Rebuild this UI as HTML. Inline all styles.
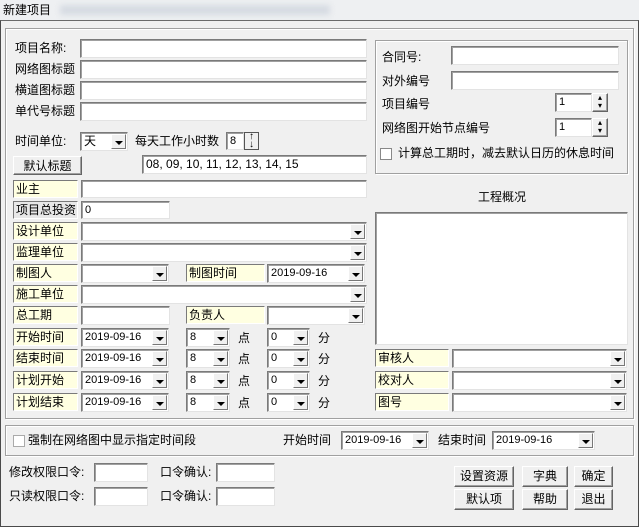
<!DOCTYPE html>
<html><head><meta charset="utf-8"><style>
*{box-sizing:border-box;margin:0;padding:0}
body{width:639px;height:527px;background:#f0f0f0;position:relative;overflow:hidden;font-family:"Liberation Sans","Noto Sans CJK SC","WenQuanYi Zen Hei",sans-serif;font-size:12px;color:#000}
.a{position:absolute;white-space:nowrap;line-height:14px}
.in{position:absolute;background:#fff;border:1px solid;border-color:#7a7a7a #e3e3e3 #e3e3e3 #7a7a7a;box-shadow:inset 1px 1px 0 #a0a0a0;font-size:11px;line-height:17px;padding-left:3px;font-family:"Liberation Sans","DejaVu Sans",sans-serif;white-space:nowrap;overflow:hidden}
.lb{position:absolute;background:#ffffe1;border:1px solid;border-color:#7a7a7a #fff #fff #7a7a7a;line-height:16px;padding-left:2px}
.g{background:#e8e8e8}
.dd{position:absolute;right:1px;top:1px;bottom:1px;width:15px;background:#f0f0f0;border:1px solid;border-color:#fff #777 #777 #fff}
.dd:after{content:"";position:absolute;left:3px;top:6px;border-left:4px solid transparent;border-right:4px solid transparent;border-top:4px solid #000}
.grp{position:absolute;border:1px solid #a0a0a0;box-shadow:1px 1px 0 #fff inset,1px 1px 0 #fff}
.btn{position:absolute;background:#f0f0f0;border:1px solid;border-color:#fff #646464 #646464 #fff;box-shadow:inset -1px -1px 0 #a0a0a0;text-align:center;line-height:18px}
.cb{position:absolute;width:12px;height:12px;background:#fff;border:1px solid #888}
</style></head><body>
<div class="a" style="left:0;top:0;width:639px;height:20px;background:#eef0f2"></div>
<div class="a" style="left:60px;top:5px;width:270px;height:10px;background:#d6dbe2;filter:blur(3px)"></div>
<div class="a" style="left:3px;top:3px;font-size:12px">新建项目</div>
<div class="a" style="left:0;top:20px;width:639px;height:507px;border:1px solid #4a4a4a;border-top:1px solid #6a6a6a"></div>

<div class="grp" style="left:5px;top:28px;width:629px;height:391px"></div>

<div class="a" style="left:15px;top:41px">项目名称:</div><div class="in" style="left:80px;top:39px;width:287px;height:19px"></div>
<div class="a" style="left:15px;top:62px">网络图标题</div><div class="in" style="left:80px;top:60px;width:287px;height:19px"></div>
<div class="a" style="left:15px;top:83px">横道图标题</div><div class="in" style="left:80px;top:81px;width:287px;height:19px"></div>
<div class="a" style="left:15px;top:104px">单代号标题</div><div class="in" style="left:80px;top:102px;width:287px;height:19px"></div>

<div class="a" style="left:15px;top:134px">时间单位:</div>
<div class="in" style="left:80px;top:132px;width:48px;height:19px;font-family:'Liberation Sans','Noto Sans CJK SC',sans-serif;font-size:12px">天<div class="dd"></div></div>
<div class="a" style="left:135px;top:134px">每天工作小时数</div>
<div class="in" style="left:226px;top:132px;width:18px;height:18px">8</div>
<div class="a" style="left:244px;top:132px;width:15px;height:18px;border:1px solid #555;background:#f0f0f0;font-size:10px;line-height:8px;font-weight:bold;text-align:center">↑<br>↓</div>

<div class="btn" style="left:13px;top:156px;width:69px;height:19px">默认标题</div>
<div class="in" style="left:142px;top:155px;width:225px;height:19px;font-family:'Liberation Sans',sans-serif;font-size:12px">08, 09, 10, 11, 12, 13, 14, 15</div>

<div class="lb" style="left:13px;top:180px;width:65px;height:18px">业主</div><div class="in" style="left:81px;top:180px;width:286px;height:18px"></div>
<div class="lb g" style="left:13px;top:201px;width:65px;height:18px">项目总投资</div><div class="in" style="left:81px;top:201px;width:89px;height:18px">0</div>
<div class="lb" style="left:13px;top:222px;width:65px;height:18px">设计单位</div><div class="in" style="left:81px;top:222px;width:286px;height:19px"><div class="dd"></div></div>
<div class="lb" style="left:13px;top:243px;width:65px;height:18px">监理单位</div><div class="in" style="left:81px;top:243px;width:286px;height:19px"><div class="dd"></div></div>
<div class="lb" style="left:13px;top:264px;width:65px;height:18px">制图人</div><div class="in" style="left:81px;top:264px;width:88px;height:19px"><div class="dd"></div></div>
<div class="lb" style="left:186px;top:264px;width:79px;height:18px">制图时间</div><div class="in" style="left:267px;top:264px;width:98px;height:19px">2019-09-16<div class="dd"></div></div>
<div class="lb" style="left:13px;top:285px;width:65px;height:18px">施工单位</div><div class="in" style="left:81px;top:285px;width:286px;height:19px"><div class="dd"></div></div>
<div class="lb" style="left:13px;top:306px;width:65px;height:18px">总工期</div><div class="in" style="left:81px;top:306px;width:89px;height:19px"></div>
<div class="lb" style="left:186px;top:306px;width:79px;height:18px">负责人</div><div class="in" style="left:267px;top:306px;width:98px;height:19px"><div class="dd"></div></div>

<div class="lb" style="left:13px;top:328px;width:65px;height:18px">开始时间</div><div class="in" style="left:81px;top:328px;width:88px;height:19px">2019-09-16<div class="dd"></div></div><div class="in" style="left:186px;top:328px;width:44px;height:19px">8<div class="dd"></div></div><div class="a" style="left:238px;top:331px">点</div><div class="in" style="left:267px;top:328px;width:43px;height:19px">0<div class="dd"></div></div><div class="a" style="left:318px;top:331px">分</div>
<div class="lb" style="left:13px;top:349px;width:65px;height:18px">结束时间</div><div class="in" style="left:81px;top:349px;width:88px;height:19px">2019-09-16<div class="dd"></div></div><div class="in" style="left:186px;top:349px;width:44px;height:19px">8<div class="dd"></div></div><div class="a" style="left:238px;top:352px">点</div><div class="in" style="left:267px;top:349px;width:43px;height:19px">0<div class="dd"></div></div><div class="a" style="left:318px;top:352px">分</div>
<div class="lb" style="left:13px;top:371px;width:65px;height:18px">计划开始</div><div class="in" style="left:81px;top:371px;width:88px;height:19px">2019-09-16<div class="dd"></div></div><div class="in" style="left:186px;top:371px;width:44px;height:19px">8<div class="dd"></div></div><div class="a" style="left:238px;top:374px">点</div><div class="in" style="left:267px;top:371px;width:43px;height:19px">0<div class="dd"></div></div><div class="a" style="left:318px;top:374px">分</div>
<div class="lb" style="left:13px;top:393px;width:65px;height:18px">计划结束</div><div class="in" style="left:81px;top:393px;width:88px;height:19px">2019-09-16<div class="dd"></div></div><div class="in" style="left:186px;top:393px;width:44px;height:19px">8<div class="dd"></div></div><div class="a" style="left:238px;top:396px">点</div><div class="in" style="left:267px;top:393px;width:43px;height:19px">0<div class="dd"></div></div><div class="a" style="left:318px;top:396px">分</div>

<div class="grp" style="left:375px;top:40px;width:253px;height:134px"></div>
<div class="a" style="left:382px;top:50px">合同号:</div><div class="in" style="left:451px;top:46px;width:168px;height:19px"></div>
<div class="a" style="left:382px;top:74px">对外编号</div><div class="in" style="left:451px;top:71px;width:168px;height:19px"></div>
<div class="a" style="left:382px;top:97px">项目编号</div><div class="in" style="left:555px;top:93px;width:37px;height:19px">1</div><div class="btn" style="left:592px;top:93px;width:16px;height:19px;font-size:8px;line-height:8px">▴<br>▾</div>
<div class="a" style="left:382px;top:121px">网络图开始节点编号</div><div class="in" style="left:555px;top:118px;width:37px;height:19px">1</div><div class="btn" style="left:592px;top:118px;width:16px;height:19px;font-size:8px;line-height:8px">▴<br>▾</div>
<div class="cb" style="left:380px;top:148px"></div><div class="a" style="left:398px;top:146px">计算总工期时，减去默认日历的休息时间</div>

<div class="a" style="left:478px;top:190px">工程概况</div>
<div class="in" style="left:375px;top:212px;width:253px;height:133px"></div>
<div class="lb" style="left:375px;top:349px;width:74px;height:18px">审核人</div><div class="in" style="left:452px;top:349px;width:175px;height:19px"><div class="dd"></div></div>
<div class="lb" style="left:375px;top:371px;width:74px;height:18px">校对人</div><div class="in" style="left:452px;top:371px;width:175px;height:19px"><div class="dd"></div></div>
<div class="lb" style="left:375px;top:393px;width:74px;height:18px">图号</div><div class="in" style="left:452px;top:393px;width:175px;height:19px"><div class="dd"></div></div>

<div class="grp" style="left:5px;top:425px;width:629px;height:31px"></div>
<div class="cb" style="left:13px;top:435px;border-color:#aaa"></div><div class="a" style="left:28px;top:433px">强制在网络图中显示指定时间段</div>
<div class="a" style="left:283px;top:433px">开始时间</div><div class="in" style="left:341px;top:431px;width:88px;height:19px">2019-09-16<div class="dd"></div></div>
<div class="a" style="left:438px;top:433px">结束时间</div><div class="in" style="left:492px;top:431px;width:103px;height:19px">2019-09-16<div class="dd"></div></div>

<div class="a" style="left:9px;top:465px">修改权限口令:</div><div class="in" style="left:94px;top:463px;width:54px;height:19px"></div>
<div class="a" style="left:160px;top:465px">口令确认:</div><div class="in" style="left:216px;top:463px;width:59px;height:19px"></div>
<div class="a" style="left:9px;top:489px">只读权限口令:</div><div class="in" style="left:94px;top:487px;width:54px;height:19px"></div>
<div class="a" style="left:160px;top:489px">口令确认:</div><div class="in" style="left:216px;top:487px;width:59px;height:19px"></div>

<div class="btn" style="left:454px;top:466px;width:60px;height:21px;line-height:19px">设置资源</div>
<div class="btn" style="left:522px;top:466px;width:46px;height:21px;line-height:19px">字典</div>
<div class="btn" style="left:574px;top:466px;width:39px;height:21px;line-height:19px">确定</div>
<div class="btn" style="left:454px;top:489px;width:60px;height:21px;line-height:19px">默认项</div>
<div class="btn" style="left:522px;top:489px;width:46px;height:21px;line-height:19px">帮助</div>
<div class="btn" style="left:574px;top:489px;width:39px;height:21px;line-height:19px">退出</div>
</body></html>
